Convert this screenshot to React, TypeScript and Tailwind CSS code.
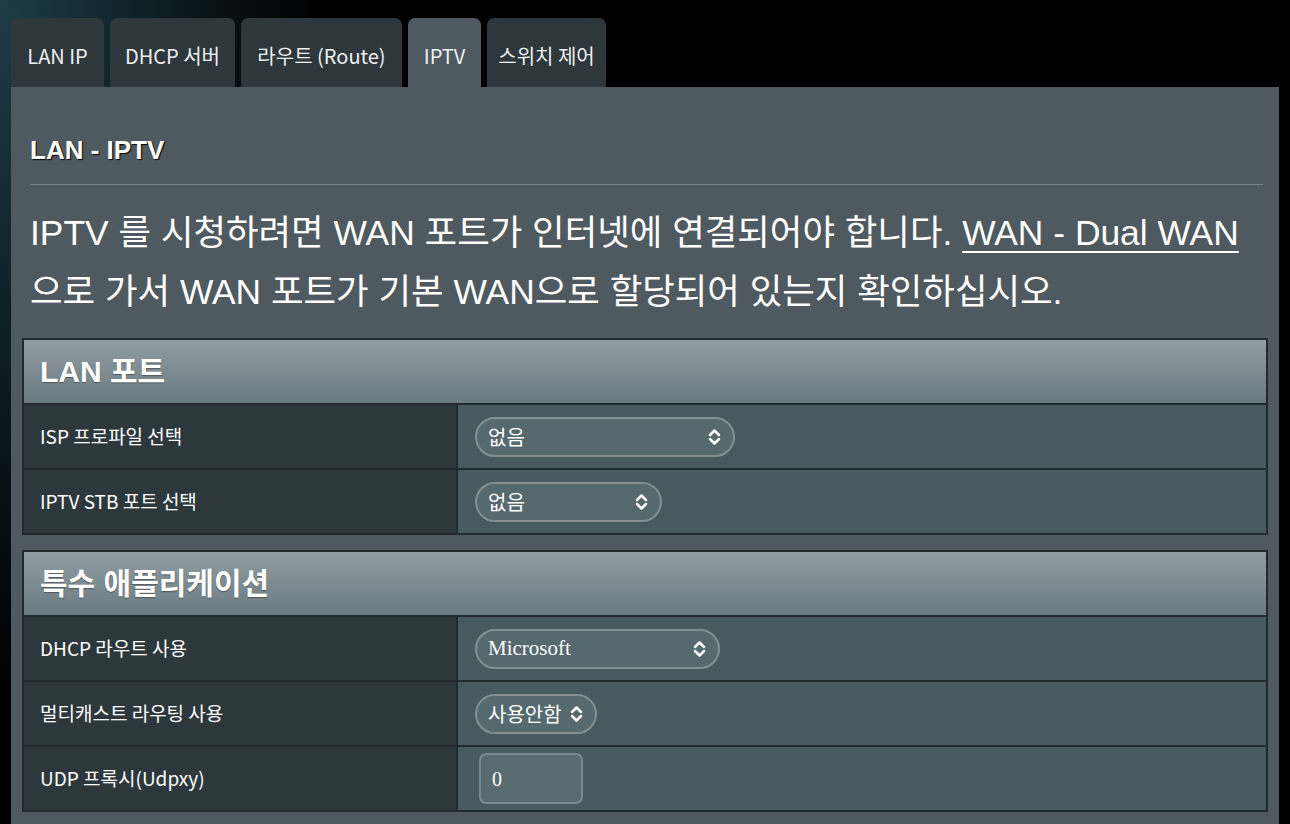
import React from "react";

const KR = "font-['Noto_Sans_CJK_KR','Noto_Sans',sans-serif]";

function UpDown() {
  return (
    <svg width="15" height="18" viewBox="0 0 15 18" fill="none" stroke="white" strokeWidth="2.5" strokeLinecap="round" strokeLinejoin="round">
      <path d="M3 7 L7.5 2.5 L12 7" />
      <path d="M3 11 L7.5 15.5 L12 11" />
    </svg>
  );
}

function Select({ value, width, serif }: { value: string; width: string; serif?: boolean }) {
  return (
    <div
      className={`${width} h-[40px] rounded-full border-2 border-[#84908f] bg-[#55696f] flex items-center justify-between pl-[11px] pr-[11px]`}
    >
      <span
        className={
          serif
            ? "font-['Liberation_Serif',serif] text-[21px] text-white"
            : `${KR} text-[20px] text-white`
        }
      >
        {value}
      </span>
      <UpDown />
    </div>
  );
}

function Row({ label, children }: { label: string; children: React.ReactNode }) {
  return (
    <div className="flex h-[65px] border-t-2 border-[#232a2d]">
      <div className={`w-[434px] border-r-2 border-[#232a2d] bg-[#2d383d] flex items-center pl-[16px] ${KR} text-[19px] text-white`}>
        {label}
      </div>
      <div className="flex-1 bg-[#475a60] flex items-center pl-[17px]">{children}</div>
    </div>
  );
}

function Header({ title }: { title: string }) {
  return (
    <div className="h-[63px] bg-[linear-gradient(to_bottom,#919ea4,#6a7980)] flex items-center pl-[16px]">
      <span className={`font-['Liberation_Sans','Noto_Sans_CJK_KR',sans-serif] font-bold text-[30px] text-white [text-shadow:0_1px_1px_rgba(0,0,0,0.35)]`}>
        {title}
      </span>
    </div>
  );
}

export default function App() {
  const tabs = [
    { t: "LAN IP", w: "w-[93px]", active: false },
    { t: "DHCP 서버", w: "w-[125px]", active: false },
    { t: "라우트 (Route)", w: "w-[161px]", active: false },
    { t: "IPTV", w: "w-[73px]", active: true },
    { t: "스위치 제어", w: "w-[119px]", active: false },
  ];
  return (
    <div className="w-[1290px] h-[824px] overflow-hidden bg-black bg-[radial-gradient(ellipse_320px_700px_at_0_0,#1f3d47_0%,#0f2026_45%,#000_100%)]">
      <div className="pl-[11px] pt-[18px]">
        <div className="flex items-end gap-[6px] h-[69px]">
          {tabs.map((tab) => (
            <div
              key={tab.t}
              className={`${tab.w} h-[69px] rounded-t-[7px] pt-[6px] flex items-center justify-center ${KR} text-[20px] text-[#eef1f2] ${
                tab.active ? "bg-[#4f5a60]" : "bg-[#2e373b]"
              }`}
            >
              {tab.t}
            </div>
          ))}
        </div>
        <div className="w-[1268px] h-[800px] bg-[#4f5a60] px-[11px] pt-[47px]">
          <div className="mx-[8px] mr-[5px] border-b border-[#75838a] pb-[18px]">
            <div className="font-['Liberation_Sans',sans-serif] font-bold text-[26px] leading-[32px] text-white [text-shadow:1px_1px_1px_#000]">
              LAN - IPTV
            </div>
          </div>
          <p className={`mx-[8px] mt-[19px] font-['Liberation_Sans','Noto_Sans_CJK_KR',sans-serif] text-[35.4px] leading-[59px] text-white`}>
            IPTV 를 시청하려면 WAN 포트가 인터넷에 연결되어야 합니다.{" "}
            <span className="underline underline-offset-[6px] decoration-2">WAN - Dual WAN</span> 으로 가서 WAN 포트가 기본 WAN으로 할당되어 있는지 확인하십시오.
          </p>
          <div className="mt-[16px] border-2 border-[#232a2d]">
            <Header title="LAN 포트" />
            <Row label="ISP 프로파일 선택">
              <Select value="없음" width="w-[260px]" />
            </Row>
            <Row label="IPTV STB 포트 선택">
              <Select value="없음" width="w-[187px]" />
            </Row>
          </div>
          <div className="mt-[15px] border-2 border-[#232a2d]">
            <Header title="특수 애플리케이션" />
            <Row label="DHCP 라우트 사용">
              <Select value="Microsoft" width="w-[245px]" serif />
            </Row>
            <Row label="멀티캐스트 라우팅 사용">
              <Select value="사용안함" width="w-[122px]" />
            </Row>
            <Row label="UDP 프록시(Udpxy)">
              <div className="ml-[4px] w-[104px] h-[51px] rounded-[7px] border-2 border-[#7c8a8f] bg-[#576b71] flex items-center pl-[11px] font-['Liberation_Serif',serif] text-[20px] text-white">
                0
              </div>
            </Row>
          </div>
        </div>
      </div>
    </div>
  );
}
